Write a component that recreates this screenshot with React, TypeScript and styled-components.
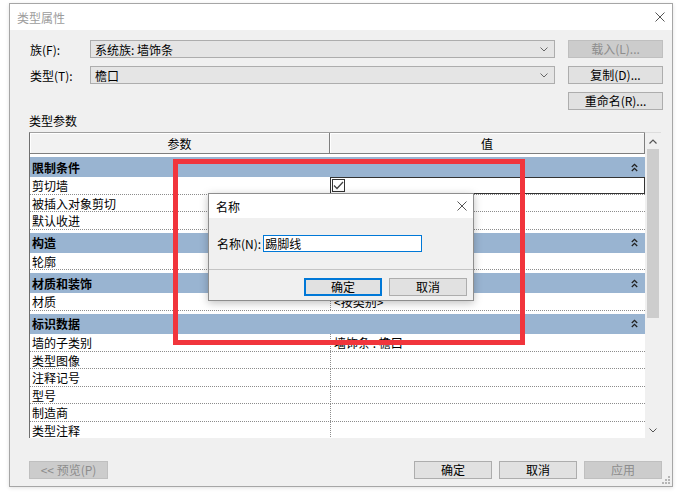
import React from "react"
import styled, { createGlobalStyle, css } from "styled-components"

type Row = {
   name: string
   value?: string
   check?: boolean
}

type Group = {
   title: string
   rows: Row[]
}

const groups: Group[] = [
   {
      title: "限制条件",
      rows: [{ name: "剪切墙", check: true }, { name: "被插入对象剪切" }, { name: "默认收进" }],
   },
   { title: "构造", rows: [{ name: "轮廓" }] },
   { title: "材质和装饰", rows: [{ name: "材质", value: "<按类别>" }] },
   {
      title: "标识数据",
      rows: [
         { name: "墙的子类别", value: "墙饰条 : 檐口" },
         { name: "类型图像" },
         { name: "注释记号" },
         { name: "型号" },
         { name: "制造商" },
         { name: "类型注释" },
      ],
   },
]

function CloseIcon() {
   return (
      <svg width="10" height="10" viewBox="0 0 10 10">
         <path d="M0.5 0.5 L9.5 9.5 M9.5 0.5 L0.5 9.5" stroke="#555" strokeWidth="1" fill="none" />
      </svg>
   )
}

function ChevronDown({ color = "#666" }: { color?: string }) {
   return (
      <svg width="8" height="5" viewBox="0 0 8 5">
         <path d="M0.5 0.5 L4 4 L7.5 0.5" stroke={color} strokeWidth="1" fill="none" />
      </svg>
   )
}

function ChevronUp({ color = "#666" }: { color?: string }) {
   return (
      <svg width="8" height="5" viewBox="0 0 8 5">
         <path d="M0.5 4.5 L4 1 L7.5 4.5" stroke={color} strokeWidth="1.2" fill="none" />
      </svg>
   )
}

function DoubleUp() {
   return (
      <svg width="7" height="9" viewBox="0 0 7 9">
         <path d="M0.8 4 L3.5 1.3 L6.2 4 M0.8 8 L3.5 5.3 L6.2 8" stroke="#222" strokeWidth="1.3" fill="none" />
      </svg>
   )
}

function App() {
   return (
      <Page>
         <GlobalStyle />
         <Dialog>
            <TitleBar>
               <TitleText>类型属性</TitleText>
               <CloseIcon />
            </TitleBar>
            <Body>
               <TopGrid>
                  <FieldLabel>族(F):</FieldLabel>
                  <Combo>
                     <span>系统族: 墙饰条</span>
                     <ChevronDown />
                  </Combo>
                  <Button disabled>载入(L)...</Button>

                  <FieldLabel>类型(T):</FieldLabel>
                  <Combo>
                     <span>檐口</span>
                     <ChevronDown />
                  </Combo>
                  <Button>复制(D)...</Button>

                  <Spacer />
                  <Spacer />
                  <Button>重命名(R)...</Button>
               </TopGrid>

               <SectionLabel>类型参数</SectionLabel>

               <Table>
                  <Grid>
                     <HeaderRow>
                        <HeaderCell>参数</HeaderCell>
                        <HeaderCell>值</HeaderCell>
                     </HeaderRow>
                     <Rows>
                        {groups.map(group => (
                           <React.Fragment key={group.title}>
                              <GroupRow>
                                 <span>{group.title}</span>
                                 <DoubleUp />
                              </GroupRow>
                              {group.rows.map(row => (
                                 <ParamRow key={row.name}>
                                    <ParamCell>{row.name}</ParamCell>
                                    <ValueCell focused={row.check}>
                                       {row.check ? (
                                          <CheckBox>
                                             <svg width="11" height="9" viewBox="0 0 11 9">
                                                <path d="M1 4.5 L4 7.5 L10 1" stroke="#444" strokeWidth="1.3" fill="none" />
                                             </svg>
                                          </CheckBox>
                                       ) : (
                                          row.value
                                       )}
                                    </ValueCell>
                                 </ParamRow>
                              ))}
                           </React.Fragment>
                        ))}
                     </Rows>
                  </Grid>
                  <ScrollBar>
                     <ScrollArrow>
                        <ChevronUp color="#555" />
                     </ScrollArrow>
                     <Thumb />
                     <Track />
                     <ScrollArrow>
                        <ChevronDown color="#555" />
                     </ScrollArrow>
                  </ScrollBar>
               </Table>

               <Footer>
                  <Button disabled width={79}>
                     {"<< 预览(P)"}
                  </Button>
                  <FooterGroup>
                     <Button width={78}>确定</Button>
                     <Button width={78}>取消</Button>
                     <Button disabled width={78}>
                        应用
                     </Button>
                  </FooterGroup>
               </Footer>
            </Body>
            <Grip>
               <svg width="8" height="8" viewBox="0 0 8 8">
                  {[
                     [6, 0],
                     [6, 3],
                     [3, 3],
                     [6, 6],
                     [3, 6],
                     [0, 6],
                  ].map(([x, y]) => (
                     <rect key={`${x}-${y}`} x={x} y={y} width="2" height="2" fill="#b5b5b5" />
                  ))}
               </svg>
            </Grip>
         </Dialog>

         <Highlight />

         <Modal>
            <ModalTitle>
               <span>名称</span>
               <CloseIcon />
            </ModalTitle>
            <ModalBody>
               <span>名称(N):</span>
               <NameInput>踢脚线</NameInput>
            </ModalBody>
            <ModalFooter>
               <Button width={78} primary>
                  确定
               </Button>
               <Button width={78}>取消</Button>
            </ModalFooter>
         </Modal>
      </Page>
   )
}

const GlobalStyle = createGlobalStyle`
   html, body {
      margin: 0;
      padding: 0;
      background: #ffffff;
   }
   body {
      font-family: "Noto Sans CJK SC", "Liberation Sans", sans-serif;
      font-size: 12px;
      color: #000;
   }
   * {
      box-sizing: border-box;
   }
`

const Page = styled.div`
   position: relative;
   width: 683px;
   height: 503px;
   padding: 3px 10px 0 9px;
   overflow: hidden;
`

const Dialog = styled.div`
   position: relative;
   width: 664px;
   height: 484px;
   border: 1px solid #a6a6a6;
   background: #f0f0f0;
   display: flex;
   flex-direction: column;
   box-shadow: 0 1px 4px rgba(0, 0, 0, 0.12);
`

const TitleBar = styled.div`
   height: 26px;
   background: #ffffff;
   display: flex;
   align-items: center;
   justify-content: space-between;
   padding: 0 7px 0 7px;
`

const TitleText = styled.span`
   color: #9c9c9c;
`

const Body = styled.div`
   flex: 1;
   display: flex;
   flex-direction: column;
   padding: 10px 9px 7px 19px;
`

const TopGrid = styled.div`
   display: grid;
   grid-template-columns: 48px 465px 95px;
   grid-template-rows: 18px 18px 18px;
   column-gap: 13px;
   row-gap: 8px;
`

const FieldLabel = styled.div`
   display: flex;
   align-items: center;
   padding-left: 1px;
   white-space: nowrap;
`

const Spacer = styled.div``

const Combo = styled.div`
   display: flex;
   align-items: center;
   justify-content: space-between;
   padding: 0 6px 0 4px;
   background: #e5e5e5;
   border: 1px solid #adadad;
`

const Button = styled.button<{ width?: number; primary?: boolean }>`
   height: 18px;
   width: ${({ width }) => (width ? `${width}px` : "auto")};
   padding: 0;
   font: inherit;
   font-size: 12px;
   line-height: 16px;
   color: #000;
   background: #e1e1e1;
   border: 1px solid #adadad;
   ${({ primary }) =>
      primary &&
      css`
         border-color: #0078d7;
         box-shadow: inset 0 0 0 1px #0078d7;
      `}
   &:disabled {
      color: #8d8d8d;
      background: #cccccc;
      border-color: #bfbfbf;
   }
`

const SectionLabel = styled.div`
   height: 22px;
   padding-top: 4px;
   line-height: 14px;
`

const Table = styled.div`
   display: flex;
   height: 306px;
   width: 632px;
`

const Grid = styled.div`
   width: 616px;
   display: flex;
   flex-direction: column;
   border-left: 1px solid #6f6f6f;
   border-top: 1px solid #a0a0a0;
   background: #ffffff;
   overflow: hidden;
`

const HeaderRow = styled.div`
   display: grid;
   grid-template-columns: 300px 315px;
   height: 21px;
   flex-shrink: 0;
`

const HeaderCell = styled.div`
   display: flex;
   align-items: center;
   justify-content: center;
   background: #f2f2f2;
   border-right: 1px solid #7f7f7f;
   border-bottom: 1px solid #7f7f7f;
   box-shadow: inset 1px 1px 0 #ffffff;
`

const Rows = styled.div`
   flex: 1;
   display: flex;
   flex-direction: column;
   overflow: hidden;
`

const GroupRow = styled.div`
   flex-shrink: 0;
   margin-top: 3px;
   height: 20px;
   display: flex;
   align-items: center;
   justify-content: space-between;
   padding: 0 7px 0 2px;
   background: #99b4d1;
   font-weight: bold;
`

const ParamRow = styled.div`
   flex-shrink: 0;
   display: grid;
   grid-template-columns: 300px 315px;
   height: 17.6px;
   border-bottom: 1px dotted #8c8c8c;
`

const ParamCell = styled.div`
   display: flex;
   align-items: center;
   padding-left: 2px;
   white-space: nowrap;
`

const ValueCell = styled.div<{ focused?: boolean }>`
   display: flex;
   align-items: center;
   padding-left: 3px;
   border-left: 1px dotted #8c8c8c;
   white-space: nowrap;
   ${({ focused }) =>
      focused &&
      css`
         padding-left: 1px;
         border-left: 1px solid #333;
         box-shadow: inset 0 1px 0 #333, inset -1px 0 0 #333, inset 0 -1px 0 #333;
      `}
`

const CheckBox = styled.span`
   width: 13px;
   height: 13px;
   border: 1px solid #333;
   background: #fff;
   display: flex;
   align-items: center;
   justify-content: center;
`

const ScrollBar = styled.div`
   width: 16px;
   display: flex;
   flex-direction: column;
   background: #f0f0f0;
   border-top: 1px solid #dcdcdc;
`

const ScrollArrow = styled.div`
   height: 16px;
   display: flex;
   align-items: center;
   justify-content: center;
   flex-shrink: 0;
`

const Thumb = styled.div`
   height: 169px;
   margin: 0 2px;
   background: #cdcdcd;
   flex-shrink: 0;
`

const Track = styled.div`
   flex: 1;
`

const Footer = styled.div`
   margin-top: 23px;
   display: flex;
   justify-content: space-between;
   padding-right: 1px;
`

const FooterGroup = styled.div`
   display: flex;
   gap: 7px;
`

const Grip = styled.div`
   position: absolute;
   right: 2px;
   bottom: 2px;
   width: 8px;
   height: 8px;
   line-height: 0;
`

const Highlight = styled.div`
   position: absolute;
   left: 173px;
   top: 159px;
   width: 352px;
   height: 186px;
   border: 5px solid #f1353c;
   pointer-events: none;
`

const Modal = styled.div`
   position: absolute;
   left: 208px;
   top: 193px;
   width: 266px;
   height: 108px;
   border: 1px solid #8e8e8e;
   background: #f0f0f0;
   display: flex;
   flex-direction: column;
   box-shadow: 0 2px 8px rgba(0, 0, 0, 0.25);
`

const ModalTitle = styled.div`
   height: 24px;
   background: #ffffff;
   display: flex;
   align-items: center;
   justify-content: space-between;
   padding: 0 6px 0 7px;
`

const ModalBody = styled.div`
   height: 52px;
   padding: 17px 0 0 8px;
   display: flex;
   align-items: flex-start;
   gap: 2px;
   line-height: 17px;
   border-bottom: 1px solid #c4c4c4;
`

const NameInput = styled.div`
   width: 159px;
   height: 17px;
   border: 1px solid #0078d7;
   background: #ffffff;
   padding-left: 1px;
   line-height: 15px;
`

const ModalFooter = styled.div`
   flex: 1;
   display: flex;
   justify-content: flex-end;
   align-items: flex-start;
   gap: 7px;
   padding: 8px 6px 0 0;
`

export default App
